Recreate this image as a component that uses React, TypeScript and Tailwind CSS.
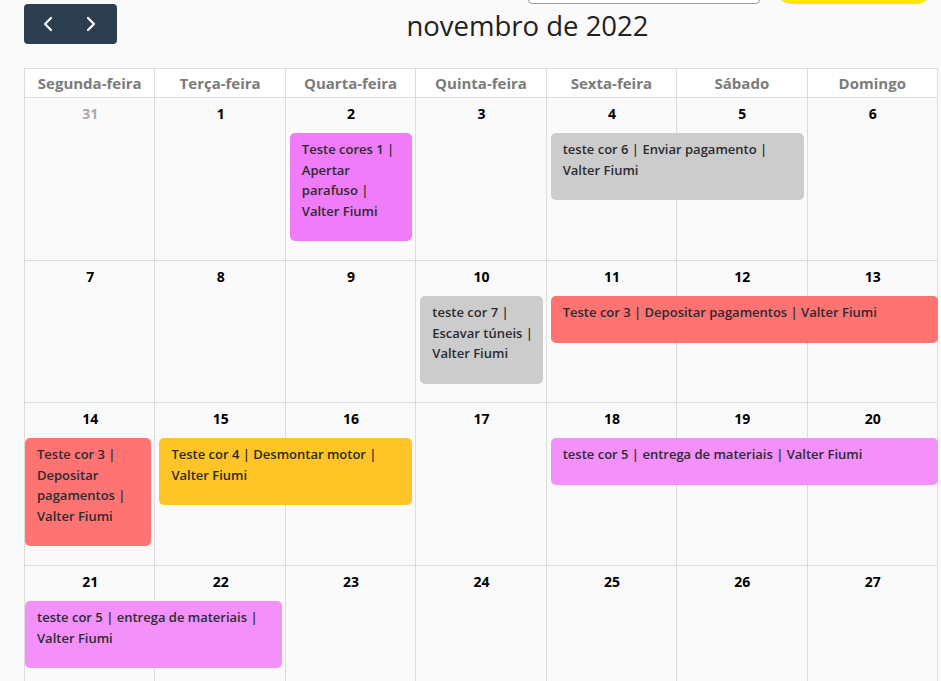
import { ChevronLeft, ChevronRight } from 'lucide-react'

type Ev = {
  col: number
  span: number
  text: string
  color: string
  contLeft?: boolean
  contRight?: boolean
}

type Week = {
  days: { n: number; muted?: boolean }[]
  height: string
  events: Ev[]
}

const DAY_NAMES = ['Segunda-feira', 'Terça-feira', 'Quarta-feira', 'Quinta-feira', 'Sexta-feira', 'Sábado', 'Domingo']

const COL_START: Record<number, string> = {
  1: 'col-start-1',
  2: 'col-start-2',
  3: 'col-start-3',
  4: 'col-start-4',
  5: 'col-start-5',
  6: 'col-start-6',
  7: 'col-start-7',
}

const COL_SPAN: Record<number, string> = {
  1: 'col-span-1',
  2: 'col-span-2',
  3: 'col-span-3',
}

const range = (a: number, b: number) => Array.from({ length: b - a + 1 }, (_, i) => ({ n: a + i }))

const WEEKS: Week[] = [
  {
    days: [{ n: 31, muted: true }, ...range(1, 6)],
    height: 'h-[163px]',
    events: [
      { col: 3, span: 1, text: 'Teste cores 1 | Apertar parafuso | Valter Fiumi', color: 'bg-[#f07cfa]' },
      { col: 5, span: 2, text: 'teste cor 6 | Enviar pagamento | Valter Fiumi', color: 'bg-[#cccccc]' },
    ],
  },
  {
    days: range(7, 13),
    height: 'h-[142px]',
    events: [
      { col: 4, span: 1, text: 'teste cor 7 | Escavar túneis | Valter Fiumi', color: 'bg-[#cccccc]' },
      { col: 5, span: 3, text: 'Teste cor 3 | Depositar pagamentos | Valter Fiumi', color: 'bg-[#ff7373]', contRight: true },
    ],
  },
  {
    days: range(14, 20),
    height: 'h-[163px]',
    events: [
      { col: 1, span: 1, text: 'Teste cor 3 | Depositar pagamentos | Valter Fiumi', color: 'bg-[#ff7373]', contLeft: true },
      { col: 2, span: 2, text: 'Teste cor 4 | Desmontar motor | Valter Fiumi', color: 'bg-[#ffc426]' },
      { col: 5, span: 3, text: 'teste cor 5 | entrega de materiais | Valter Fiumi', color: 'bg-[#f390fa]', contRight: true },
    ],
  },
  {
    days: range(21, 27),
    height: 'h-[163px]',
    events: [
      { col: 1, span: 2, text: 'teste cor 5 | entrega de materiais | Valter Fiumi', color: 'bg-[#f390fa]', contLeft: true },
    ],
  },
]

function WeekRow({ week }: { week: Week }) {
  return (
    <div className={`grid grid-cols-7 grid-rows-[35px_auto_1fr] ${week.height}`}>
      {week.days.map((d, i) => (
        <div
          key={`bg-${d.n}`}
          className={`${COL_START[i + 1]} row-start-1 row-span-3 border-r border-b border-[#dddddd]`}
        />
      ))}
      {week.days.map((d, i) => (
        <div
          key={`n-${d.n}`}
          className={`${COL_START[i + 1]} row-start-1 pt-[6px] text-center text-[14px] leading-[20px] font-bold ${d.muted ? 'text-[#a9a9a9]' : 'text-black'}`}
        >
          {d.n}
        </div>
      ))}
      {week.events.map(ev => (
        <div
          key={ev.text + ev.col}
          className={`${COL_START[ev.col]} ${COL_SPAN[ev.span]} row-start-2 self-start rounded-[5px] ${ev.color} ${ev.contLeft ? 'ml-0' : 'ml-[4px]'} ${ev.contRight ? 'mr-0' : 'mr-[4px]'} pl-[12px] pr-[8px] pt-[6px] pb-[20px] text-[13px] leading-[20.5px] font-semibold text-[#2b2b30]`}
        >
          {ev.text}
        </div>
      ))}
    </div>
  )
}

export default function App() {
  return (
    <div
      className="min-h-screen overflow-hidden bg-[#fafafa] pl-[24px] pr-[3px]"
      style={{ fontFamily: '"Open Sans", "Noto Sans", sans-serif' }}
    >
      {/* scrolled-off search bar */}
      <div className="flex h-[4px] items-end">
        <div className="ml-[504px] h-[38px] w-[232px] rounded-[4px] border border-[#999999] bg-white" />
        <div className="ml-[13px] h-[40px] w-[162px] rounded-full bg-[#ffe600]" />
      </div>

      {/* Toolbar */}
      <div className="mb-[24px] flex h-[40px] items-center justify-between">
        <div className="flex h-[40px] w-[93px] overflow-hidden rounded-[4px] bg-[#2c3e50] text-white">
          <button className="flex flex-1 items-center justify-center pl-[2px]">
            <ChevronLeft size={24} strokeWidth={2.2} />
          </button>
          <button className="flex flex-1 items-center justify-center pr-[4px]">
            <ChevronRight size={24} strokeWidth={2.2} />
          </button>
        </div>
        <h2 className="mt-[3px] text-[27.5px] font-medium leading-none text-[#212121]">novembro de 2022</h2>
        <div />
      </div>

      {/* Calendar */}
      <div className="w-[914px] border-l border-t border-[#dddddd]">
        <div className="grid grid-cols-7 bg-white">
          {DAY_NAMES.map(name => (
            <div
              key={name}
              className="flex h-[29px] items-center justify-center border-r border-b border-[#dddddd] text-[15px] font-bold text-[#7b7b7b]"
            >
              {name}
            </div>
          ))}
        </div>
        {WEEKS.map((w, i) => (
          <WeekRow key={i} week={w} />
        ))}
      </div>
    </div>
  )
}
